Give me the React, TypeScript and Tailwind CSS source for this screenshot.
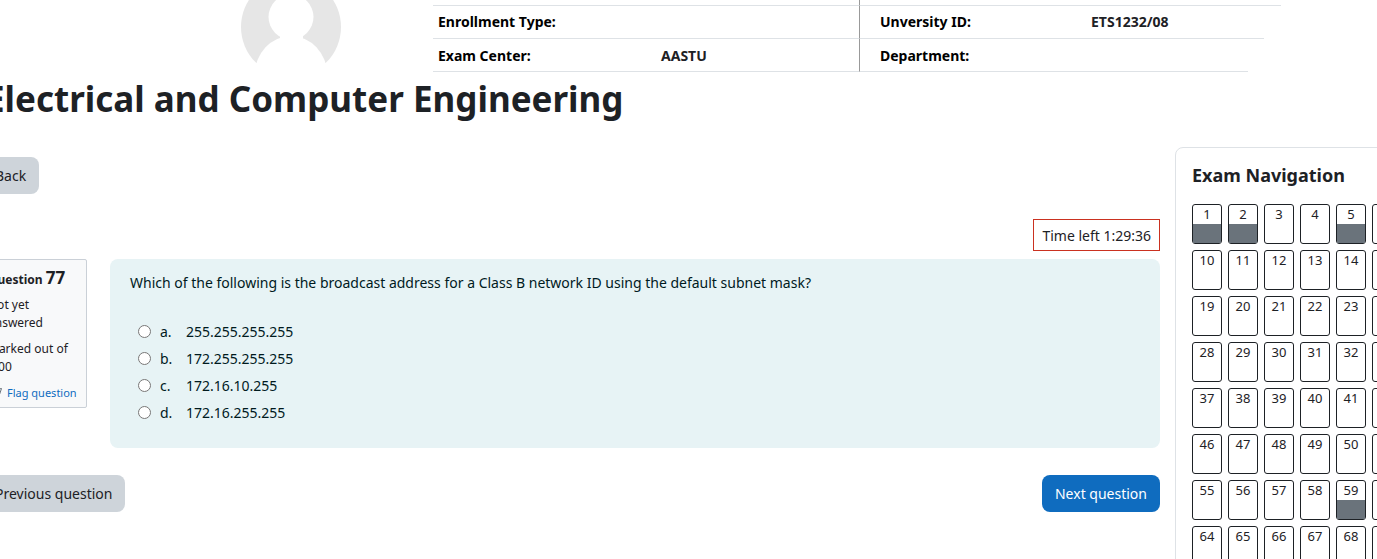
import React from "react";

const answers = [
  { letter: "a.", text: "255.255.255.255" },
  { letter: "b.", text: "172.255.255.255" },
  { letter: "c.", text: "172.16.10.255" },
  { letter: "d.", text: "172.16.255.255" },
];

const answered = new Set([1, 2, 5, 59]);
const questionNumbers = Array.from({ length: 72 }, (_, i) => i + 1);

function Avatar() {
  return (
    <svg viewBox="0 0 100 86" className="h-[86px] w-[100px] shrink-0" role="img" aria-label="User picture">
      <circle cx="50" cy="50" r="50" fill="#e6e6e6" />
      <circle cx="50" cy="40" r="22.5" fill="#fff" />
      <rect x="39" y="58" width="23" height="8" fill="#fff" />
      <ellipse cx="50" cy="97" rx="36" ry="38" fill="#fff" />
    </svg>
  );
}

function CandidateTable() {
  const label = "px-[5px] text-left font-bold text-black";
  const line = "border-b border-b-[#dee2e6]";
  return (
    <table className="w-[848px] table-fixed border-separate border-spacing-0 text-[14px] leading-[21px]">
      <colgroup>
        <col className="w-[223px]" />
        <col className="w-[204px]" />
        <col className="w-[226px]" />
        <col className="w-[162px]" />
        <col className="w-[16px]" />
        <col className="w-[17px]" />
      </colgroup>
      <tbody>
        <tr className="h-[6px]">
          <th className={line} />
          <td className={`${line} border-r border-r-[#999]`} />
          <th className={line} />
          <td className={line} colSpan={3} />
        </tr>
        <tr className="h-[33px]">
          <th scope="row" className={`${label} ${line} pb-[2px]`}>Enrollment Type:</th>
          <td className={`${line} border-r border-r-[#999]`} />
          <th scope="row" className={`${line} pb-[2px] pl-5 text-left font-bold text-black`}>Unversity ID:</th>
          <td className={`${line} px-[5px] pb-[2px] font-bold`} colSpan={2}>ETS1232/08</td>
        </tr>
        <tr className="h-[33px]">
          <th scope="row" className={`${label} ${line}`}>Exam Center:</th>
          <td className={`${line} border-r border-r-[#999] px-[5px] font-bold`}>AASTU</td>
          <th scope="row" className={`${line} pl-5 text-left font-bold text-black`}>Department:</th>
          <td className={line} />
        </tr>
      </tbody>
    </table>
  );
}

function QuestionInfo() {
  return (
    <section className="w-[105px] shrink-0 rounded-[2px] border border-[#cad0d7] bg-[#f8f9fa] px-[5px] pt-1 pb-[5px] text-[12px] leading-[18px]">
      <h3 className="font-bold leading-[28px] whitespace-nowrap">
        Question <span className="text-[17px]">77</span>
      </h3>
      <div className="mt-[2px]">Not yet<br />answered</div>
      <div className="mt-2">Marked out of 1.00</div>
      <a href="#flag" className="mt-2 flex items-center gap-[5px] text-[11px] whitespace-nowrap text-[#0f6cbf]">
        <svg viewBox="0 0 14 14" className="h-[14px] w-[14px] shrink-0" fill="none" stroke="#6a737b" aria-hidden="true">
          <path d="M1.5 1v12M1.5 2.500c4-1.500 6 1.500 12 0l-2 6c-4 1.500-6-1.500-10 0" />
        </svg>
        Flag question
      </a>
    </section>
  );
}

function QuestionBody() {
  return (
    <fieldset className="min-w-0 flex-1 rounded-lg bg-[#e7f3f5] px-5 pt-3 pb-[22px] text-[14px] text-[#001a1e]">
      <legend className="float-left mb-[23px] w-full leading-6">
        Which of the following is the broadcast address for a Class B network ID using the default subnet mask?
      </legend>
      <div className="clear-both flex flex-col pl-2">
        {answers.map((a) => (
          <label key={a.letter} className="flex h-[27px] items-center">
            <input type="radio" name="answer" className="mr-[9px] h-[13px] w-[13px]" />
            <span className="w-[26px]">{a.letter}</span>
            <span>{a.text}</span>
          </label>
        ))}
      </div>
    </fieldset>
  );
}

function ExamNavigation() {
  return (
    <nav aria-label="Exam Navigation" className="w-[352px] shrink-0 rounded-t-lg border border-[#dee2e6] px-4 pt-[15px] pb-4">
      <h2 className="text-[18px] leading-6 font-bold">Exam Navigation</h2>
      <div className="mt-[17px] flex flex-wrap gap-[6px]">
        {questionNumbers.map((n) => (
          <a
            key={n}
            href={`#question-${n}`}
            className="flex h-10 w-[30px] flex-col rounded-[3px] border border-[#1d2125] text-center text-[13px]"
          >
            <span className="h-[19px] leading-[19px]">{n}</span>
            <span className={answered.has(n) ? "flex-1 bg-[#6a737b]" : "flex-1"} />
          </a>
        ))}
      </div>
    </nav>
  );
}

export default function App() {
  return (
    <div className="h-screen overflow-hidden bg-white font-['Noto_Sans','Open_Sans',sans-serif] text-[14px] text-[#1d2125]">
      <div className="-mr-[150px] -ml-[18px]">
        <header className="flex items-start gap-[92px] pl-[259px]">
          <div className="-mt-[23px] h-[86px]">
            <Avatar />
          </div>
          <CandidateTable />
        </header>
        <h1 className="mt-[3px] pl-[3px] text-[35px] leading-[48px] font-bold">Electrical and Computer Engineering</h1>
        <div className="mt-6 flex items-start gap-[15px]">
          <main className="min-w-0 flex-1 pt-[10px]">
            <button type="button" className="h-[37px] rounded-lg bg-[#ced4da] px-[13px]">Back</button>
            <div className="mt-[25px] flex justify-end">
              <div role="timer" className="flex h-8 items-center border border-[#ca3120] px-2">Time left 1:29:36</div>
            </div>
            <div className="mt-2 flex items-start gap-[23px]">
              <QuestionInfo />
              <QuestionBody />
            </div>
            <div className="mt-[27px] flex justify-between">
              <button type="button" className="h-[37px] rounded-lg bg-[#ced4da] px-[13px]">Previous question</button>
              <button type="button" className="h-[37px] rounded-lg bg-[#0f6cbf] px-[13px] text-white">Next question</button>
            </div>
          </main>
          <ExamNavigation />
        </div>
      </div>
    </div>
  );
}
